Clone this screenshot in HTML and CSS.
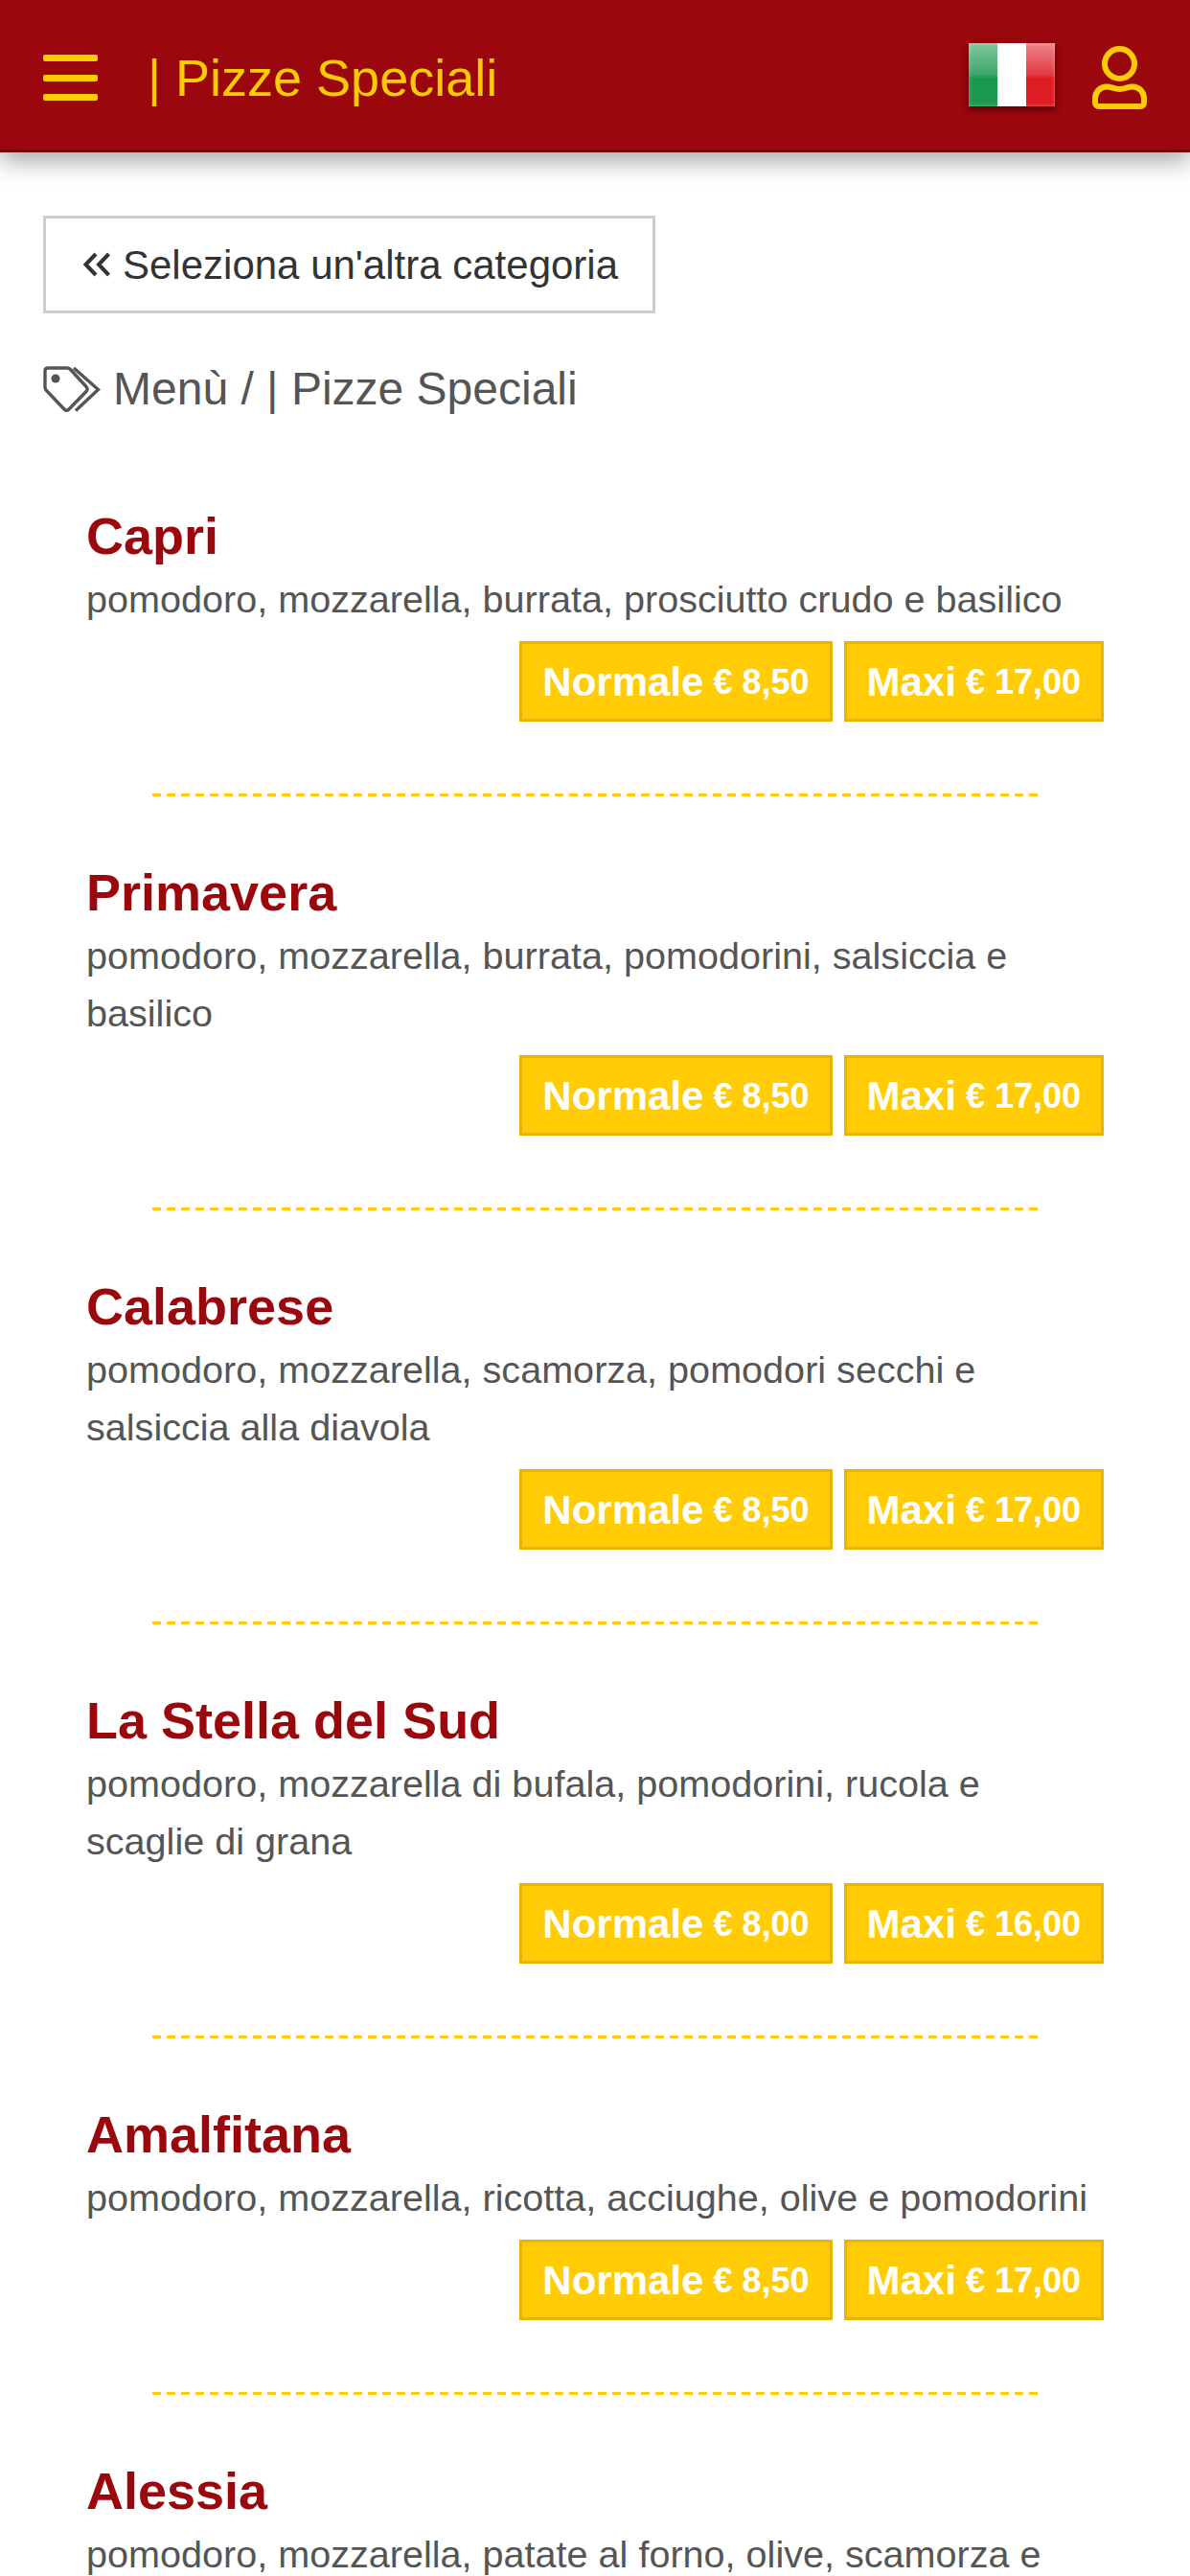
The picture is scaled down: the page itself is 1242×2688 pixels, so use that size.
FILE: index.html
```html
<!DOCTYPE html>
<html lang="it">
<head>
<meta charset="utf-8">
<title>Pizze Speciali</title>
<link rel="stylesheet" href="styles.css">
</head>
<body>
<header class="topbar">
  <button class="burger" aria-label="Menu"><span></span><span></span><span></span></button>
  <h1 class="topbar-title">| Pizze Speciali</h1>
  <div class="topbar-tools">
    <div class="flag"><i class="flag-g"></i><i class="flag-w"></i><i class="flag-r"></i></div>
    <svg class="user" viewBox="0 0 57 66" aria-label="Utente">
      <circle cx="28.5" cy="18.5" r="15.5" fill="none" stroke="#ffcb05" stroke-width="6"/>
      <path d="M15 42.500C20 42.500 23 45 28.500 45C34 45 37 42.500 42 42.500C49 42.500 54 48 54 55V59C54 61.500 52.500 63 50 63H7C4.500 63 3 61.500 3 59V55C3 48 8 42.500 15 42.500Z" fill="none" stroke="#ffcb05" stroke-width="6" stroke-linejoin="round"/>
    </svg>
  </div>
</header>

<main class="content">
  <a class="back-btn" href="#">
    <svg class="back-icon" viewBox="0 0 30 26"><path d="M14 2 3.500 13 14 24M27.500 2 17 13 27.500 24" fill="none" stroke="#333" stroke-width="4"/></svg>
    <span class="back-label">Seleziona un'altra categoria</span>
  </a>

  <div class="crumbs">
    <svg class="tags" viewBox="0 0 60 48">
      <path d="M2 5C2 3 3.200 2 5 2H25C26.500 2 27.500 2.500 28.500 3.500L45 21.500C46.300 23 46.300 25 45 26.500L27 45C25.500 46.500 23.500 46.500 22 45L3.500 25.500C2.500 24.500 2 23.500 2 22Z" fill="none" stroke="#555" stroke-width="3.400"/>
      <circle cx="13" cy="13" r="4.500" fill="#555"/>
      <path d="M32 2 57.500 24.500 34 46.500" fill="none" stroke="#555" stroke-width="3.400"/>
    </svg>
    <span>Menù / | Pizze Speciali</span>
  </div>

  <section class="dish">
    <h2>Capri</h2>
    <p>pomodoro, mozzarella, burrata, prosciutto crudo e basilico</p>
    <div class="prices">
      <span class="price">Normale <small>€ 8,50</small></span>
      <span class="price">Maxi <small>€ 17,00</small></span>
    </div>
  </section>
  <section class="dish">
    <h2>Primavera</h2>
    <p>pomodoro, mozzarella, burrata, pomodorini, salsiccia e basilico</p>
    <div class="prices">
      <span class="price">Normale <small>€ 8,50</small></span>
      <span class="price">Maxi <small>€ 17,00</small></span>
    </div>
  </section>
  <section class="dish">
    <h2>Calabrese</h2>
    <p>pomodoro, mozzarella, scamorza, pomodori secchi e salsiccia alla diavola</p>
    <div class="prices">
      <span class="price">Normale <small>€ 8,50</small></span>
      <span class="price">Maxi <small>€ 17,00</small></span>
    </div>
  </section>
  <section class="dish">
    <h2>La Stella del Sud</h2>
    <p>pomodoro, mozzarella di bufala, pomodorini, rucola e scaglie di grana</p>
    <div class="prices">
      <span class="price">Normale <small>€ 8,00</small></span>
      <span class="price">Maxi <small>€ 16,00</small></span>
    </div>
  </section>
  <section class="dish">
    <h2>Amalfitana</h2>
    <p>pomodoro, mozzarella, ricotta, acciughe, olive e pomodorini</p>
    <div class="prices">
      <span class="price">Normale <small>€ 8,50</small></span>
      <span class="price">Maxi <small>€ 17,00</small></span>
    </div>
  </section>
  <section class="dish">
    <h2>Alessia</h2>
    <p>pomodoro, mozzarella, patate al forno, olive, scamorza e</p>
  </section>
</main>
</body>
</html>
```

FILE: styles.css
```css
* { box-sizing: border-box; }

html, body {
  margin: 0;
  height: 2688px;
  overflow: hidden;
  background: #fff;
  font-family: "Liberation Sans", Arial, sans-serif;
}

/* top bar */
.topbar {
  position: relative;
  display: flex;
  align-items: center;
  height: 159px;
  padding: 0 45px;
  background: #9a070c;
  border-bottom: 3px solid #780206;
  box-shadow: 0 9px 24px rgba(0, 0, 0, 0.35);
}

.burger {
  display: flex;
  flex-direction: column;
  justify-content: space-between;
  width: 57px;
  height: 48px;
  margin-top: 6px;
  padding: 0;
  border: 0;
  background: none;
}

.burger span {
  display: block;
  height: 7px;
  border-radius: 2px;
  background: #ffcb05;
}

.topbar-title {
  margin: 5px 0 0 52px;
  font-size: 54px;
  font-weight: 400;
  color: #ffcb05;
}

.topbar-tools {
  display: flex;
  align-items: center;
  gap: 39px;
  margin-left: auto;
}

.flag {
  display: flex;
  width: 90px;
  height: 66px;
  position: relative;
  box-shadow: 0 3px 6px rgba(60, 0, 0, 0.8);
}

.flag i { flex: 1; }
.flag-g { background: #1a9850; }
.flag-w { background: #fff; }
.flag-r { background: #dd1c24; }

/* glossy highlight fading out towards the middle of the flag */
.flag::after {
  content: "";
  position: absolute;
  inset: 0;
  background: linear-gradient(to bottom, rgba(255,255,255,.46), rgba(255,255,255,.14) 50%, rgba(255,255,255,0) 56%);
  box-shadow: inset 0 0 4px rgba(255, 255, 255, 0.35);
}

.user {
  width: 57px;
  height: 66px;
  margin-top: 6px;
}

/* page body */
.content {
  padding: 66px 45px 0;
}

.back-btn {
  display: inline-flex;
  align-items: center;
  gap: 12px;
  width: 639px;
  height: 102px;
  padding-left: 38px;
  border: 3px solid #ccc;
  font-size: 42px;
  color: #333;
  text-decoration: none;
}

.back-icon {
  width: 30px;
  height: 26px;
}

.back-label {
  padding-top: 1px;
}

.crumbs {
  display: flex;
  align-items: center;
  gap: 13px;
  margin-top: 51px;
  margin-bottom: 96px;
  font-size: 48px;
  color: #555;
}

.tags {
  width: 60px;
  height: 48px;
}

/* menu entries */
.dish {
  margin: 70px 0 0;
  padding: 0 45px;
}

/* dashed rule between entries */
.dish::after {
  content: "";
  display: block;
  height: 3px;
  margin: 75px 69px 0;
  background: repeating-linear-gradient(to right, #ffcb05 0 9px, transparent 9px 15px);
}

.dish:last-child::after { display: none; }

.dish h2 {
  margin: 0;
  font-size: 54px;
  line-height: 60px;
  font-weight: 700;
  color: #9a070c;
}

.dish p {
  margin: 6px 0 0;
  font-size: 39.6px;
  line-height: 60px;
  color: #555;
}

.prices {
  display: flex;
  justify-content: flex-end;
  gap: 12px;
  margin-top: 14px;
}

.price {
  display: flex;
  align-items: center;
  gap: 10px;
  height: 84px;
  padding: 2px 21px 0;
  border: 3px solid #e8b505;
  background: #ffcc05;
  color: #fff;
  font-size: 42px;
  font-weight: 700;
}

.price small {
  font-size: 36px;
}
```
